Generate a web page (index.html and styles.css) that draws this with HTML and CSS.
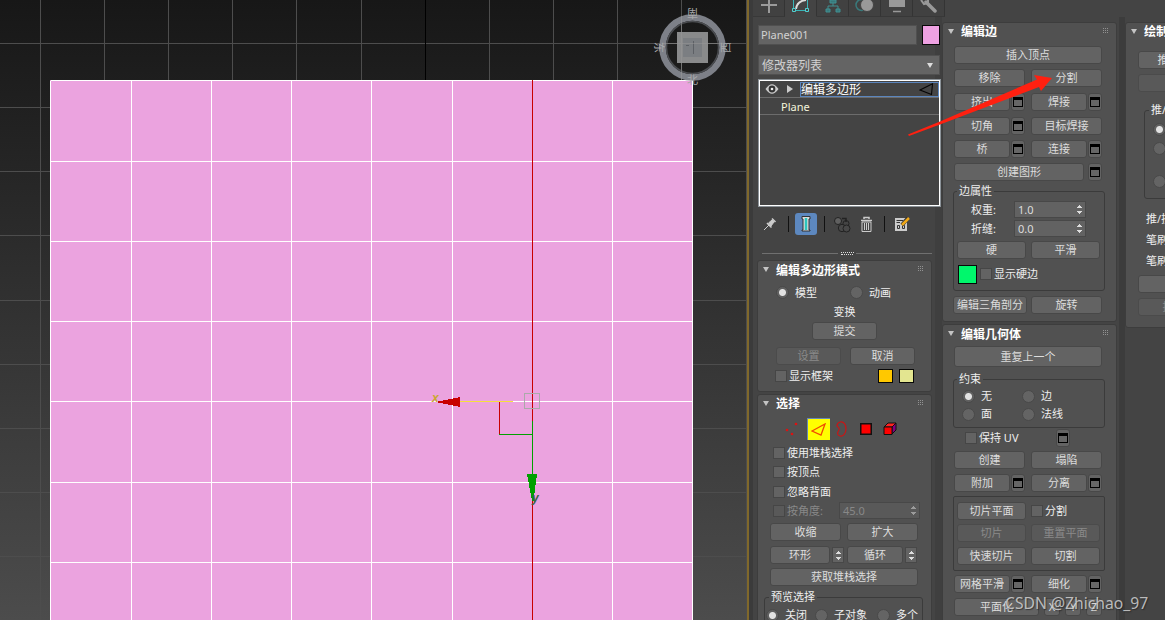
FILE: index.html
```html
<!DOCTYPE html>
<html lang="zh-CN">
<head>
<meta charset="utf-8">
<title>编辑多边形</title>
<link rel="stylesheet" href="styles.css">
</head>
<body>
<main class="app">
  <svg class="viewport" width="747" height="620" viewBox="0 0 747 620" shape-rendering="crispEdges">
    <defs>
      <linearGradient id="sky" x1="0" y1="0" x2="0" y2="1"><stop offset="0" stop-color="#171717"/><stop offset="1" stop-color="#4c4c4c"/></linearGradient>
    </defs>
    <rect width="747" height="620" fill="url(#sky)"/>
    <path d="M40.5 0V620M104.5 0V620M168.5 0V620M232.5 0V620M296.5 0V620M361.5 0V620M489.5 0V620M553.5 0V620M617.5 0V620M681.5 0V620M746.5 0V620M0 43.5H747M0 107.5H747M0 171.5H747M0 235.5H747M0 300.5H747M0 364.5H747M0 428.5H747M0 492.5H747M0 556.5H747" stroke="#4d4d4d"/>
    <path d="M425.5 0V80" stroke="#000"/>
    <rect x="50" y="80" width="643" height="540" fill="#eba3df"/>
    <path d="M50.5 81V620M131.5 80V620M211.5 80V620M291.5 80V620M371.5 80V620M452.5 80V620M612.5 80V620M692.5 80V620M51 80.5H693M50 161.5H693M50 241.5H693M50 321.5H693M50 401.5H693M50 482.5H693M50 562.5H693" stroke="#fff"/>
    <path d="M532.5 80V620" stroke="#c80000"/>
    <path d="M459 401.5H513" stroke="#f5e03c"/>
    <path d="M499.5 402V434" stroke="#c80000"/>
    <path d="M499 434.5H532M532.5 421V476" stroke="#00a000"/>
    <rect x="524.5" y="393.5" width="15" height="15" fill="none" stroke="#aaa"/>
    <path d="M435 402L460 397V407Z" fill="#c80000"/>
    <path d="M527 474H537L533.5 501H532Z" fill="#00a000"/>
    <g class="axis" shape-rendering="auto"><text x="432" y="402" fill="#c9a830">x</text><text x="532" y="502" fill="#406040">y</text></g>
    <g shape-rendering="auto">
      <circle cx="692.5" cy="47.500" r="30" fill="none" stroke="#858991" stroke-width="6.500" opacity=".92"/>
      <circle cx="692.5" cy="47.500" r="26" fill="none" stroke="#4b4d51" stroke-width="1.500"/>
      <rect x="677" y="32" width="31" height="31" fill="#898a8b"/>
      <rect x="683" y="38" width="19" height="19" fill="#7b7e82"/>
      <path d="M686 45.500H689M693.500 41V54" fill="none" stroke="#5d6065"/>
      <path d="M681.500 16V80M662 43.500H723" stroke="#999" opacity=".5"/>
      <g class="compass"><text transform="translate(698 9) rotate(180)">南</text><text transform="translate(655 42) rotate(90)">东</text><text transform="translate(730 53) rotate(-90)">西</text><text x="687" y="84">北</text></g>
    </g>
  </svg>

  <section class="command">
    <nav class="tabs">
      <span class="tab"><svg width="18" height="14"><path d="M9 -3V13M1 5H17" stroke="#9b9b9b" stroke-width="2"/></svg></span>
      <span class="tab active"><svg width="18" height="14"><path d="M4 9Q5 1 14 0" fill="none" stroke="#ddd" stroke-width="2"/><path d="M1.500 0V10.500H15.500V0" fill="none" stroke="#3ab5b8"/><path d="M.5 8.500H3.500V11.500H.5ZM13.500 8.500H16.500V11.500H13.500Z" fill="#444" stroke="#50cfd0"/></svg></span>
      <span class="tab"><svg width="18" height="14"><path d="M6 0H12V3H6ZM2 9H6V12H2ZM12 9H16V12H12Z" fill="#39797b" stroke="#419092"/><path d="M9 3V6M4 9V6H14V9" fill="none" stroke="#419092"/></svg></span>
      <span class="tab"><svg width="20" height="14"><circle cx="6.500" cy="5" r="5.500" fill="none" stroke="#39797b" stroke-width="1.500"/><circle cx="12" cy="5" r="6.500" fill="#999" stroke="#444"/></svg></span>
      <span class="tab"><svg width="18" height="14"><path d="M1 -2H17V7H1Z" fill="#999"/><path d="M5 11.500H13" stroke="#999" stroke-width="1.500"/></svg></span>
      <span class="tab"><svg width="18" height="14"><path d="M6 2L15 11" stroke="#999" stroke-width="3.500" stroke-linecap="round"/><path d="M1 0L4 4L8 3L8 -1" fill="none" stroke="#999" stroke-width="2"/></svg></span>
    </nav>

    <div class="columns">
      <div class="col-a">
        <div class="row name-row"><span class="field name">Plane001</span><i class="swatch object"></i></div>
        <div class="field combo"><span>修改器列表</span><i class="down"></i></div>
        <div class="stack">
          <div class="stack-item">
            <svg width="14" height="12"><path d="M.5 6Q7-3.500 13.500 6Q7 15.500 .5 6Z" fill="#ccc"/><circle cx="7" cy="6" r="3.400" fill="#333"/><circle cx="7" cy="6" r="1.300" fill="#eee"/></svg>
            <i class="right"></i>
            <span class="stack-name"><span>编辑多边形</span><svg width="16" height="13"><path d="M1 7L13.500 .8L12.500 11.500Z" fill="none" stroke="#050505" stroke-width="1.100"/></svg></span>
          </div>
          <div class="stack-item base">Plane</div>
        </div>
        <div class="stack-tools">
          <svg width="14" height="14"><path d="M1 13L6 8" stroke="#ccc"/><path d="M4 6L8.500 10.500M9 1.500L12.500 5" stroke="#ccc" stroke-width="1.600"/><path d="M5.500 6L9 3L11 5L8 9Z" fill="#ccc" stroke="#ccc"/></svg>
          <i class="bar"></i>
          <span class="show-end"><svg width="12" height="18"><path d="M2 1.500H10V4H9V15H10V16H2V15H3V4H2Z" fill="#ddd" stroke="#333"/><path d="M6 3V15" stroke="#2cc5bd" stroke-width="2.500"/></svg></span>
          <i class="bar"></i>
          <svg class="unique" width="18" height="17"><circle cx="5" cy="5" r="3.500" fill="#606060" stroke="#222"/><path d="M9 2.500H13V6" fill="none" stroke="#222" stroke-width="1.500"/><circle cx="13" cy="7.500" r="3" fill="none" stroke="#222"/><circle cx="9" cy="12" r="3.700" fill="#484848" stroke="#222"/><circle cx="13.500" cy="12.500" r="3.500" fill="#484848" stroke="#222"/></svg>
          <svg class="trash" width="13" height="17"><path d="M1 4.500H12M4 3V1.500H9V3" fill="none" stroke="#ccc" stroke-width="1.500"/><path d="M2 6H11V15.500H2Z" fill="none" stroke="#ccc"/><path d="M4.500 7V14M6.500 7V14M8.500 7V14" stroke="#ccc"/></svg>
          <i class="bar"></i>
          <svg class="config" width="17" height="17"><path d="M1 2H13V15H1Z" fill="#ccc"/><path d="M2.500 4.500H9M2.500 6.500H6M3.500 9.500H5.500V12.500H3.500ZM8.500 9.500H10.500V12.500H8.500Z" fill="none" stroke="#333"/><path d="M8 9L14 2" stroke="#333" stroke-width="4"/><path d="M8 9L15 2" stroke="#f0a818" stroke-width="2.500"/></svg>
        </div>
        <div class="splitter"><i></i><b></b><i></i></div>

        <section class="rollout mode">
          <h2>编辑多边形模式</h2>
          <div class="row mode-radios"><i class="radio on"></i><label>模型</label><i class="radio"></i><label>动画</label></div>
          <p class="transform">变换</p>
          <span class="btn commit">提交</span>
          <div class="row settings"><span class="btn off">设置</span><span class="btn">取消</span></div>
          <div class="row cage"><i class="check"></i><label>显示框架</label><i class="swatch orange"></i><i class="swatch cream"></i></div>
        </section>

        <section class="rollout selection">
          <h2>选择</h2>
          <div class="row levels">
            <svg width="14" height="14"><circle cx="3" cy="8" r="1.300" fill="#d11"/><circle cx="12" cy="2" r="1.300" fill="#d11"/><circle cx="8" cy="12" r="1.300" fill="#d11"/></svg>
            <span class="edge-on"><svg width="16" height="14"><path d="M1 8L14 1L10 12Z" fill="none" stroke="#f04a00" stroke-width="1.300"/></svg></span>
            <svg class="border-icon" width="12" height="17"><path d="M4 1C8 0 10 4 10 8S7 16 4 15S1 12 3 9Q4 7 1 5Q1 2 4 1Z" fill="none" stroke="#c91616" stroke-width="1.200"/></svg>
            <svg class="poly-icon" width="12" height="12"><path d="M.75.75H11.250V11.250H.75Z" fill="#f00" stroke="#111" stroke-width="1.500"/></svg>
            <svg class="element-icon" width="14" height="14"><path d="M1 5L5 1H13L9 5Z" fill="#f22" stroke="#111"/><path d="M9 5L13 1V8L9 12Z" fill="#800080" stroke="#111"/><path d="M1 5H9V12.500H1Z" fill="#f00" stroke="#111"/></svg>
          </div>
          <div class="row opt"><i class="check"></i><label>使用堆栈选择</label></div>
          <div class="row opt second"><i class="check"></i><label>按顶点</label></div>
          <div class="row opt"><i class="check"></i><label>忽略背面</label></div>
          <div class="row opt dim"><i class="check"></i><label class="angle">按角度:</label><span class="spinner wide">45.0<i class="updown"></i></span></div>
          <div class="row pair shrink"><span class="btn">收缩</span><span class="btn">扩大</span></div>
          <div class="row ring"><span class="btn ring-btn">环形</span><i class="mini"><i class="updown"></i></i><span class="btn loop-btn">循环</span><i class="mini"><i class="updown"></i></i></div>
          <span class="btn full get-stack">获取堆栈选择</span>
          <fieldset class="preview"><legend>预览选择</legend>
            <div class="row preview-row"><i class="radio on"></i><label>关闭</label><i class="radio"></i><label>子对象</label><i class="radio"></i><label>多个</label></div>
          </fieldset>
        </section>
      </div>

      <div class="col-b">
        <section class="rollout edges">
          <h2>编辑边</h2>
          <span class="btn full insert">插入顶点</span>
          <div class="row pair m5"><span class="btn">移除</span><span class="btn">分割</span></div>
          <div class="row pair m6"><span class="split"><span class="btn">挤出</span><i class="box"></i></span><span class="split"><span class="btn">焊接</span><i class="box"></i></span></div>
          <div class="row pair m6"><span class="split"><span class="btn">切角</span><i class="box"></i></span><span class="btn">目标焊接</span></div>
          <div class="row pair m5"><span class="split"><span class="btn">桥</span><i class="box"></i></span><span class="split"><span class="btn">连接</span><i class="box"></i></span></div>
          <div class="row shape m5"><span class="btn">创建图形</span><i class="box"></i></div>
          <fieldset class="edge-props"><legend>边属性</legend>
            <div class="row value"><label>权重:</label><span class="spinner">1.0<i class="updown"></i></span></div>
            <div class="row value"><label>折缝:</label><span class="spinner">0.0<i class="updown"></i></span></div>
            <div class="row inner-pair hardness"><span class="btn">硬</span><span class="btn">平滑</span></div>
            <div class="row hard"><i class="swatch green"></i><i class="check"></i><label>显示硬边</label></div>
          </fieldset>
          <div class="row pair triangulate"><span class="btn">编辑三角剖分</span><span class="btn">旋转</span></div>
        </section>

        <section class="rollout geometry">
          <h2>编辑几何体</h2>
          <span class="btn full repeat">重复上一个</span>
          <fieldset class="constraints"><legend>约束</legend>
            <div class="row"><i class="radio on"></i><label>无</label><i class="radio"></i><label>边</label></div>
            <div class="row"><i class="radio"></i><label>面</label><i class="radio"></i><label>法线</label></div>
          </fieldset>
          <div class="row uv"><i class="check"></i><label>保持 UV</label><i class="box"></i></div>
          <div class="row pair create"><span class="btn">创建</span><span class="btn">塌陷</span></div>
          <div class="row pair m5"><span class="split"><span class="btn">附加</span><i class="box"></i></span><span class="split"><span class="btn">分离</span><i class="box"></i></span></div>
          <div class="slice">
            <div class="row inner-pair"><span class="btn">切片平面</span><span class="split-check"><i class="check"></i><label>分割</label></span></div>
            <div class="row inner-pair"><span class="btn off">切片</span><span class="btn off">重置平面</span></div>
            <div class="row inner-pair quick"><span class="btn">快速切片</span><span class="btn">切割</span></div>
          </div>
          <div class="row pair m5"><span class="split"><span class="btn">网格平滑</span><i class="box"></i></span><span class="split"><span class="btn">细化</span><i class="box"></i></span></div>
          <div class="row planar m5"><span class="btn">平面化</span><span class="btn axis-btn">X</span><span class="btn axis-btn">Y</span><span class="btn axis-btn">Z</span></div>
        </section>
      </div>

      <div class="col-c">
        <section class="rollout paint">
          <h2>绘制变形</h2>
          <span class="btn push">推/拉</span>
          <span class="btn off relax">松弛</span>
          <fieldset class="direction"><legend>推/拉方向</legend>
            <i class="radio on"></i><i class="radio"></i><i class="radio last"></i>
          </fieldset>
          <p>推/拉值</p><p>笔刷大小</p><p>笔刷强度</p>
          <span class="btn brush">笔刷选项</span>
          <span class="btn off apply">提交</span>
        </section>
      </div>
    </div>
  </section>
</main>
<svg class="pointer" width="146" height="64" viewBox="907 73 146 64"><path d="M1052 78L1034 75L1037 79.500L940 121.500L908 134.500L909 136L940 124.500L1039 87L1041 91Z" fill="#ff2010"/></svg>
<div class="watermark">CSDN @Zhichao_97</div>
</body>
</html>
```

FILE: styles.css
```css
* { box-sizing: border-box; }
body { margin: 0; width: 1165px; height: 620px; overflow: hidden; position: relative; background: #444; color: #eee; font: 11px/14px "Noto Sans", "Noto Sans CJK SC", sans-serif; }
i { font-style: normal; flex: none; }
svg { display: block; flex: none; }
p { margin: 0; }
.app { display: flex; width: 1165px; height: 620px; overflow: hidden; }
.axis { font: italic bold 12px "Liberation Sans", sans-serif; }
.compass { font: 11px "Noto Sans CJK SC", sans-serif; fill: #a8a9ab; }

.command { flex: 1; min-width: 0; height: 620px; border-left: 2px solid #80682b; background: #444; }
.tabs { display: flex; height: 17px; padding-left: 4px; box-shadow: inset 4px 0 #3b3b3b; }
.tab { width: 32px; height: 17px; display: flex; justify-content: center; border-right: 1px solid #343434; border-bottom: 1px solid #383838; background: #414141; }
.tab.active { background: #444; border-bottom-color: #444; }
.columns { display: flex; height: 603px; }
.col-a { width: 193px; padding: 8px 2px 0 9px; box-shadow: inset 4px 0 #3b3b3b, inset -7px 0 #3f3f3f; flex: none; }
.col-b { width: 174px; padding-top: 5px; flex: none; }
.col-c { flex: 1; min-width: 0; margin-left: 3px; padding: 5px 0 0 7px; overflow: hidden; box-shadow: inset 6px 0 #3c3c3c; }
.row { display: flex; align-items: center; }
label, legend, p { white-space: nowrap; }

.field { background: #646464; border: 1px solid #505050; color: #d2d2d2; }
.name-row { height: 20px; justify-content: space-between; }
.name { width: 159px; height: 20px; padding: 2px; font-size: 11px; }
.swatch { display: block; border: 1px solid #080808; }
.object { width: 18px; height: 20px; background: #eea1e2; }
.combo { margin-top: 10px; height: 20px; padding: 1px 6px 0 3px; display: flex; align-items: center; justify-content: space-between; font-size: 12px; }
.down { border: 3.500px solid transparent; border-top: 5px solid #ddd; border-bottom: 0; }
.right { border: 4px solid transparent; border-left: 6px solid #ccc; border-right: 0; }
.stack { height: 126px; margin: 5px 0 0 1px; border: 1px solid #fff; outline: 1px solid #8b9298; background: #444; }
.stack-item { height: 17px; display: flex; align-items: center; padding-left: 5px; gap: 8px; border-bottom: 1px solid #6c6c6c; color: #fff; font-size: 12px; }
.stack-name { display: flex; justify-content: space-between; align-items: center; width: 139px; height: 15px; margin-left: -1px; border: 1px solid #5b85bd; white-space: nowrap; }
.stack-name span { padding-top: 2px; }
.stack-name svg { margin-right: 3px; }
.base { padding: 2px 0 0 21px; font-size: 11px; color: #f4f4dc; }

.stack-tools { height: 24px; margin-top: 6px; padding-left: 5px; display: flex; align-items: center; }
.bar { width: 1px; height: 16px; background: #111; }
.stack-tools .bar:nth-of-type(1) { margin-left: 11px; }
.show-end { width: 22px; height: 22px; margin: 0 7px 0 6px; border-radius: 3px; background: #5d88bf; display: flex; align-items: center; justify-content: center; }
.unique { margin-left: 8px; }
.trash { margin: 0 11px 0 9px; }
.config { margin-left: 9px; }
.splitter { display: flex; align-items: center; justify-content: space-between; margin: 14px 8px 0 4px; height: 6px; }
.splitter i { width: 76px; height: 1px; background: #707070; }
.splitter b { width: 13px; height: 3px; background: repeating-linear-gradient(90deg, #ddd 0 1px, transparent 1px 2px) 0 0 / 13px 1px repeat-x, repeating-linear-gradient(90deg, #ddd 0 1px, transparent 1px 2px) 1px 2px / 13px 1px repeat-x; }

.rollout { border: 1px solid #3d3d3d; border-radius: 3px; background: #515151; }
.rollout h2 { position: relative; margin: 0; height: 18px; padding-left: 18px; font-size: 12px; line-height: 18px; font-weight: 700; color: #fff; white-space: nowrap; }
.rollout h2::before { content: ""; position: absolute; left: 5px; top: 6px; border: 3.500px solid transparent; border-top: 5px solid #c4c4c4; border-bottom: 0; }
.rollout h2::after { content: ""; position: absolute; right: 8px; top: 5px; width: 6px; height: 6px; background: conic-gradient(#929292 25%, transparent 0) 0 0 / 2px 2px; }
.btn { display: flex; align-items: center; justify-content: center; height: 18px; border: 1px solid #484848; border-radius: 3px; background: #636363; color: #ddd; white-space: nowrap; line-height: 14px; flex: none; }
.btn.off { background: #595959; border-color: #4b4b4b; color: #8a8a8a; }
.radio { display: block; width: 13px; height: 13px; border: 1px solid #494949; border-radius: 50%; background: #646464; }
.radio.on { background: radial-gradient(circle, #e2e2e2 0 3px, #606060 4px); }
.check { display: block; width: 12px; height: 12px; border: 1px solid #464646; background: #636363; }
.box { width: 14px; height: 18px; border: 1px solid #484848; border-radius: 3px; background: linear-gradient(#000, #000) 1px 3px / 10px 3px no-repeat, linear-gradient(#666, #666) 2px 6px / 8px 6px no-repeat, linear-gradient(#000, #000) 1px 3px / 10px 10px no-repeat, #636363; }
.updown { display: block; width: 5px; height: 9px; background: linear-gradient(#ddd, #ddd) 2px 0 / 1px 1px no-repeat, linear-gradient(#ddd, #ddd) 1px 1px / 3px 1px no-repeat, linear-gradient(#ddd, #ddd) 0 2px / 5px 1px no-repeat, linear-gradient(#ddd, #ddd) 0 6px / 5px 1px no-repeat, linear-gradient(#ddd, #ddd) 1px 7px / 3px 1px no-repeat, linear-gradient(#ddd, #ddd) 2px 8px / 1px 1px no-repeat; }
.spinner { display: flex; align-items: center; justify-content: space-between; width: 72px; height: 17px; padding: 0 3px; border: 1px solid #484848; background: #626262; color: #ddd; }
fieldset { margin: 0; padding: 0; border: 1px solid #3b3b3b; border-radius: 3px; min-width: 0; }
legend { margin-left: 4px; padding: 0 2px; line-height: 14px; }

.mode { width: 175px; height: 132px; margin: 4px 0 0 -1px; }
.mode h2 { line-height: 20px; }
.mode-radios { margin: 6px 0 0 18px; height: 15px; }
.mode-radios label { margin-left: 6px; width: 55px; }
.transform { margin-top: 5px; text-align: center; }
.commit { width: 65px; margin: 3px 0 0 54px; }
.settings { gap: 9px; margin: 7px 0 0 18px; }
.settings .btn { width: 65px; }
.cage { height: 15px; margin: 3px 0 0 17px; }
.cage label { margin-left: 2px; width: 89px; }
.orange, .cream { width: 15px; height: 14px; }
.orange { background: #ffc800; }
.cream { margin-left: 6px; background: #e3e590; }
.selection { width: 175px; height: 300px; margin: 2px 0 0 -1px; }
.levels { height: 22px; margin: 5px 0 0 26px; }
.edge-on { display: flex; align-items: center; justify-content: center; width: 23px; height: 22px; margin-left: 9px; background: #ff0; border-top: 1px solid #6689b4; border-left: 1px solid #6689b4; }
.border-icon { margin-left: 6px; }
.poly-icon { margin-left: 12px; }
.element-icon { margin-left: 11px; }
.opt { height: 15px; margin: 5px 0 0 15px; }
.opt.second, .opt.dim { margin-top: 4px; }
.opt label { margin-left: 2px; }
.dim, .dim .spinner { color: #888; }
.dim .check, .dim .spinner { background: #595959; }
.dim .updown { opacity: .5; }
.opt .angle { width: 52px; }
.wide { width: 81px; }
.pair { display: grid; grid-template-columns: 71px 71px; gap: 6px; margin-left: 11px; }
.full { width: 148px; margin-left: 11px; }
.selection .pair, .selection .full { margin-left: 12px; }
.shrink { margin-top: 5px; }
.ring { margin: 5px 0 0 12px; }
.ring-btn { width: 60px; }
.mini { display: flex; justify-content: center; align-items: center; width: 12px; height: 16px; border: 1px solid #484848; background: #636363; margin-left: 2px; }
.loop-btn { width: 56px; margin-left: 3px; }
.get-stack { margin-top: 4px; }
.preview { width: 159px; height: 55px; margin: 4px 0 0 6px; }
.preview-row { margin: 4px 0 0 1px; }
.preview-row label { margin-left: 6px; }
.preview-row label + .radio { margin-left: 8px; }
.preview-row label:nth-of-type(2) + .radio { margin-left: 10px; }

.m5 { margin-top: 5px; }
.m6 { margin-top: 6px; }
.split { display: flex; gap: 1px; }
.split .btn { width: 56px; }
.edges { height: 300px; width: 175px; }
.insert { margin-top: 5px; }
.shape { margin-left: 11px; gap: 4px; }
.shape .btn { width: 130px; }
.edge-props { width: 152px; height: 107px; margin: 3px 0 0 10px; }
.edge-props legend, .constraints legend { margin-left: 3px; }
.value { margin: 2px 0 0 17px; }
.value:first-of-type { margin-top: 3px; }
.value label { width: 43px; }
.inner-pair { display: grid; grid-template-columns: 69px 69px; gap: 5px; margin-left: 3px; }
.hardness { margin-top: 4px; }
.hard { margin: 5px 0 0 4px; height: 20px; }
.green { width: 19px; height: 19px; background: #00f76c; }
.hard .check { margin-left: 3px; }
.hard label { margin-left: 2px; }
.triangulate { margin-top: 5px; }
.triangulate .btn:first-child { width: 74px; margin-left: -1px; }
.geometry { width: 175px; height: 360px; margin-top: 2px; }
.geometry h2 { line-height: 20px; }
.repeat { height: 21px; margin-top: 3px; }
.constraints { width: 152px; height: 56px; margin: 5px 0 0 10px; }
.constraints .row { height: 18px; margin-left: 8px; }
.constraints .row:first-of-type { margin-top: 1px; }
.constraints label { width: 41px; margin-left: 6px; }
.uv { height: 18px; margin: 1px 0 0 22px; }
.uv label { width: 77px; margin-left: 2px; }
.create { margin-top: 4px; }
.slice { display: grid; gap: 4px; width: 152px; height: 75px; margin: 4px 0 0 10px; padding-top: 5px; border: 1px solid #3b3b3b; border-radius: 2px; align-content: start; }
.quick { margin-top: 1px; }
.slice + .row { margin-top: 4px; }
.split-check { display: flex; align-items: center; gap: 2px; }
.planar { margin-left: 11px; gap: 5px; }
.planar > .btn:first-child { width: 85px; }
.planar .axis-btn { width: 16px; }

.paint { width: 175px; height: 306px; margin-left: -1px; }
.paint .btn { width: 148px; margin-left: 12px; }
.paint .push { width: 65px; margin-top: 10px; }
.paint .relax { margin-top: 5px; }
.direction { width: 150px; height: 96px; margin: 11px 0 0 18px; }
.direction .radio { margin: 6px 0 0 8px; }
.direction .last { margin-top: 20px; }
.paint p { height: 21px; padding: 3px 0 0 20px; }
.paint .direction + p { margin-top: 10px; }
.paint .brush { margin-top: 3px; }
.paint .apply { width: 71px; margin-top: 5px; }

.pointer { position: absolute; left: 907px; top: 73px; }
.watermark { position: absolute; left: 1005px; top: 591px; font: 15.700px/24px "Noto Sans", sans-serif; color: rgba(220, 220, 220, .8); text-shadow: 1px 1px 1px rgba(30, 30, 30, .6); white-space: nowrap; }
```
